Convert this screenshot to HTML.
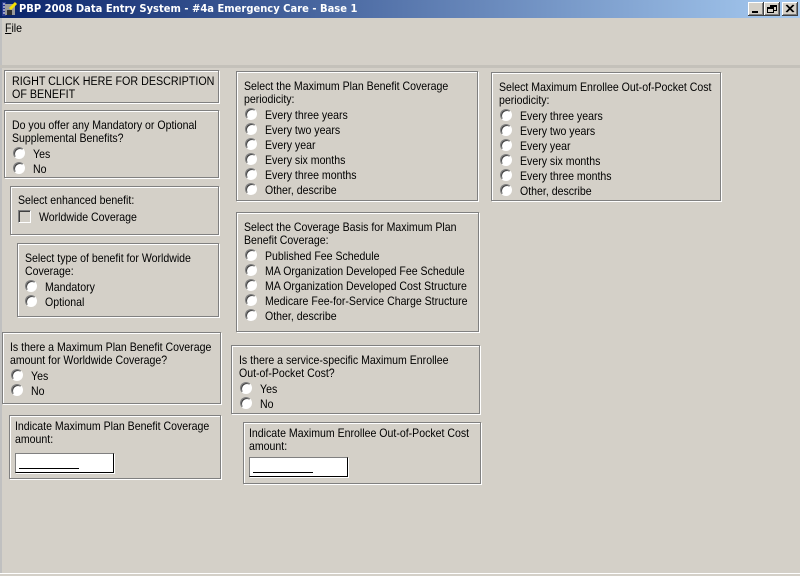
<!DOCTYPE html>
<html><head><meta charset="utf-8"><style>
html,body{margin:0;padding:0;width:800px;height:576px;overflow:hidden;background:#d4d0c8}
*{box-sizing:border-box}
body{position:relative;font:12px/15px "Liberation Sans",Arial,sans-serif;color:#000}
.a{position:absolute}
.tb{left:0;top:0;width:800px;height:18px;background:linear-gradient(90deg,#0a246a,#a6caf0)}
.title{left:19px;top:1px;color:#fff;font:bold 11px/16px "DejaVu Sans",sans-serif;white-space:nowrap;transform:scaleX(.906);transform-origin:0 0}
.btn{top:2px;width:16px;height:14px;background:#d4d0c8;box-shadow:inset -1px -1px 0 #404040,inset 1px 1px 0 #fff,inset -2px -2px 0 #808080}
.box{position:absolute;border:1px solid #808080;box-shadow:1px 1px 0 #fff,inset 1px 1px 0 #fff}
.t{position:absolute;white-space:nowrap;transform:translateY(1px) scaleX(.88);transform-origin:0 0}
.r{position:absolute;width:12px;height:12px;border-radius:50%;background:#fff;border:1px solid #808080;border-right-color:#fff;border-bottom-color:#fff;box-shadow:inset 1px 1px 0 #404040}
.in{position:absolute;width:99px;height:20px;background:#fff;border:1px solid #808080;border-right-color:#000;border-bottom-color:#000;box-shadow:1px 1px 0 #fff}
.in i{position:absolute;left:3px;top:14px;width:60px;height:1px;background:#000}
</style></head><body>
<div class="a" style="left:0;top:18px;width:2px;height:555px;background:#c0c0c0"></div>
<div class="a" style="left:0;top:573px;width:800px;height:1px;background:#fff"></div>
<div class="a" style="left:0;top:65px;width:800px;height:3px;background:#c4c1ba"></div>
<div class="a tb"></div>
<svg class="a" style="left:2px;top:1px" width="16" height="16" viewBox="0 0 16 16"><rect x="0" y="1" width="4" height="14" fill="#2a3a90"/><rect x="3" y="3" width="10" height="11" fill="#9a9a9a"/><rect x="5" y="9" width="5" height="5" fill="#303030"/><path d="M8 8L14 2" stroke="#f4e000" stroke-width="3"/><path d="M1 3h2M1 6h2M1 9h2M1 12h2" stroke="#fff"/></svg>
<div class="a title">PBP 2008 Data Entry System - #4a Emergency Care - Base 1</div>
<div class="a btn" style="left:748px"><div class="a" style="left:4px;top:9px;width:6px;height:2px;background:#000"></div></div>
<div class="a btn" style="left:764px"><div class="a" style="left:6px;top:3px;width:7px;height:6px;border:1px solid #000;border-top-width:2px"></div><div class="a" style="left:3px;top:5px;width:7px;height:6px;border:1px solid #000;border-top-width:2px;background:#d4d0c8"></div></div>
<div class="a btn" style="left:782px"><svg class="a" style="left:3px;top:2px" width="10" height="10"><path d="M1 1L8 8M8 1L1 8M2 1L9 8M9 1L2 8" stroke="#000" stroke-width="1"/></svg></div>
<div class="t" style="left:5px;top:20px"><u>F</u>ile</div>

<div class="box" style="left:4px;top:70px;width:215px;height:33px"></div>
<div class="t" style="left:12px;top:74px;font-size:12.2px;line-height:13px">RIGHT CLICK HERE FOR DESCRIPTION<br>OF BENEFIT</div>

<div class="box" style="left:4px;top:110px;width:215px;height:68px"></div>
<div class="t" style="left:12px;top:118px;line-height:13px">Do you offer any Mandatory or Optional<br>Supplemental Benefits?</div>
<div class="r" style="left:13px;top:147px"></div><div class="t" style="left:33px;top:146px">Yes</div>
<div class="r" style="left:13px;top:162px"></div><div class="t" style="left:33px;top:161px">No</div>

<div class="box" style="left:10px;top:186px;width:209px;height:49px"></div>
<div class="t" style="left:18px;top:192px">Select enhanced benefit:</div>
<div class="a" style="left:18px;top:210px;width:13px;height:13px;background:#d4d0c8;border:1px solid #808080;border-right-color:#fff;border-bottom-color:#fff;box-shadow:inset 1px 1px 0 #404040"></div>
<div class="t" style="left:39px;top:209px">Worldwide Coverage</div>

<div class="box" style="left:17px;top:243px;width:202px;height:74px"></div>
<div class="t" style="left:25px;top:251px;line-height:13px">Select type of benefit for Worldwide<br>Coverage:</div>
<div class="r" style="left:25px;top:280px"></div><div class="t" style="left:45px;top:279px">Mandatory</div>
<div class="r" style="left:25px;top:295px"></div><div class="t" style="left:45px;top:294px">Optional</div>

<div class="box" style="left:2px;top:332px;width:219px;height:72px"></div>
<div class="t" style="left:10px;top:340px;line-height:13px">Is there a Maximum Plan Benefit Coverage<br>amount for Worldwide Coverage?</div>
<div class="r" style="left:11px;top:369px"></div><div class="t" style="left:31px;top:368px">Yes</div>
<div class="r" style="left:11px;top:384px"></div><div class="t" style="left:31px;top:383px">No</div>

<div class="box" style="left:9px;top:415px;width:212px;height:64px"></div>
<div class="t" style="left:15px;top:419px;line-height:13px">Indicate Maximum Plan Benefit Coverage<br>amount:</div>
<div class="in" style="left:15px;top:453px"><i></i></div>

<div class="box" style="left:236px;top:71px;width:242px;height:130px"></div>
<div class="t" style="left:244px;top:79px;line-height:13px">Select the Maximum Plan Benefit Coverage<br>periodicity:</div>
<div class="r" style="left:245px;top:108px"></div><div class="t" style="left:265px;top:107px">Every three years</div>
<div class="r" style="left:245px;top:123px"></div><div class="t" style="left:265px;top:122px">Every two years</div>
<div class="r" style="left:245px;top:138px"></div><div class="t" style="left:265px;top:137px">Every year</div>
<div class="r" style="left:245px;top:153px"></div><div class="t" style="left:265px;top:152px">Every six months</div>
<div class="r" style="left:245px;top:168px"></div><div class="t" style="left:265px;top:167px">Every three months</div>
<div class="r" style="left:245px;top:183px"></div><div class="t" style="left:265px;top:182px">Other, describe</div>

<div class="box" style="left:236px;top:212px;width:243px;height:120px"></div>
<div class="t" style="left:244px;top:220px;line-height:13px">Select the Coverage Basis for Maximum Plan<br>Benefit Coverage:</div>
<div class="r" style="left:245px;top:249px"></div><div class="t" style="left:265px;top:248px">Published Fee Schedule</div>
<div class="r" style="left:245px;top:264px"></div><div class="t" style="left:265px;top:263px">MA Organization Developed Fee Schedule</div>
<div class="r" style="left:245px;top:279px"></div><div class="t" style="left:265px;top:278px">MA Organization Developed Cost Structure</div>
<div class="r" style="left:245px;top:294px"></div><div class="t" style="left:265px;top:293px">Medicare Fee-for-Service Charge Structure</div>
<div class="r" style="left:245px;top:309px"></div><div class="t" style="left:265px;top:308px">Other, describe</div>

<div class="box" style="left:231px;top:345px;width:249px;height:69px"></div>
<div class="t" style="left:239px;top:353px;line-height:13px">Is there a service-specific Maximum Enrollee<br>Out-of-Pocket Cost?</div>
<div class="r" style="left:240px;top:382px"></div><div class="t" style="left:260px;top:381px">Yes</div>
<div class="r" style="left:240px;top:397px"></div><div class="t" style="left:260px;top:396px">No</div>

<div class="box" style="left:243px;top:422px;width:238px;height:62px"></div>
<div class="t" style="left:249px;top:426px;line-height:13px">Indicate Maximum Enrollee Out-of-Pocket Cost<br>amount:</div>
<div class="in" style="left:249px;top:457px"><i></i></div>

<div class="box" style="left:491px;top:72px;width:230px;height:129px"></div>
<div class="t" style="left:499px;top:80px;line-height:13px">Select Maximum Enrollee Out-of-Pocket Cost<br>periodicity:</div>
<div class="r" style="left:500px;top:109px"></div><div class="t" style="left:520px;top:108px">Every three years</div>
<div class="r" style="left:500px;top:124px"></div><div class="t" style="left:520px;top:123px">Every two years</div>
<div class="r" style="left:500px;top:139px"></div><div class="t" style="left:520px;top:138px">Every year</div>
<div class="r" style="left:500px;top:154px"></div><div class="t" style="left:520px;top:153px">Every six months</div>
<div class="r" style="left:500px;top:169px"></div><div class="t" style="left:520px;top:168px">Every three months</div>
<div class="r" style="left:500px;top:184px"></div><div class="t" style="left:520px;top:183px">Other, describe</div>
</body></html>
